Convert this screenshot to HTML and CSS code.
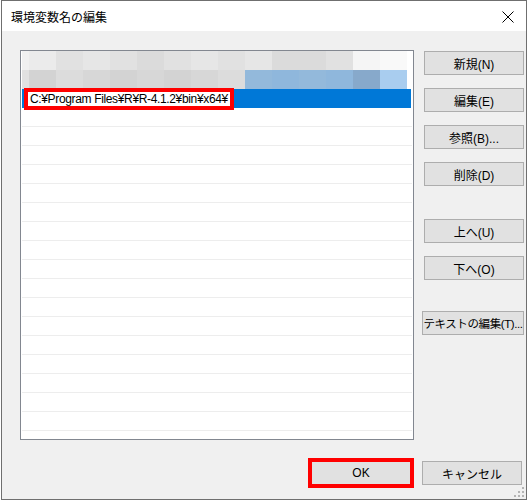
FILE: index.html
```html
<!DOCTYPE html>
<html lang="ja">
<head>
    <meta charset="UTF-8">
    <title>環境変数名の編集</title>
    <link rel="stylesheet" href="styles.css">
</head>
<body>
    <div class="window">
        <!-- タイトルバー -->
        <div class="titlebar">
            <span class="title">環境変数名の編集</span>
            <svg class="close" width="12" height="12" viewBox="0 0 12 12">
                <path d="M0.5 0.5 L11.5 11.5 M11.5 0.5 L0.5 11.5" stroke="#000" stroke-width="1" fill="none"/>
            </svg>
        </div>

        <div class="content">
            <div class="main">
                <!-- パス一覧 -->
                <div class="list">
                    <div class="row mosaic">
                        <span class="edge g0"></span><span class="g1"></span><span class="g3"></span><span class="g2"></span><span class="g3"></span><span class="g4"></span><span class="g3"></span><span class="g2"></span><span class="g3"></span><span class="g2"></span><span class="g4"></span><span class="g4"></span><span class="g3"></span><span class="w1"></span><span class="w2"></span>
                    </div>
                    <div class="row mosaic">
                        <span class="edge g3"></span><span class="d1"></span><span class="d3"></span><span class="d2"></span><span class="d1"></span><span class="d2"></span><span class="d1"></span><span class="d2"></span><span class="d3"></span><span class="b1"></span><span class="b2"></span><span class="b1"></span><span class="b2"></span><span class="b3"></span><span class="b4"></span>
                    </div>
                    <div class="row selected">
                        <div class="edit">C:¥Program Files¥R¥R-4.1.2¥bin¥x64¥</div>
                    </div>
                    <div class="row"></div>
                    <div class="row"></div>
                    <div class="row"></div>
                    <div class="row"></div>
                    <div class="row"></div>
                    <div class="row"></div>
                    <div class="row"></div>
                    <div class="row"></div>
                    <div class="row"></div>
                    <div class="row"></div>
                    <div class="row"></div>
                    <div class="row"></div>
                    <div class="row"></div>
                    <div class="row"></div>
                    <div class="row"></div>
                    <div class="row"></div>
                    <div class="row"></div>
                    <div class="row"></div>
                </div>

                <!-- 操作ボタン -->
                <div class="side">
                    <button class="btn">新規(N)</button>
                    <button class="btn">編集(E)</button>
                    <button class="btn">参照(B)...</button>
                    <button class="btn">削除(D)</button>
                    <button class="btn group">上へ(U)</button>
                    <button class="btn">下へ(O)</button>
                    <button class="btn wide group">テキストの編集(T)...</button>
                </div>
            </div>

            <div class="footer">
                <button class="btn ok">OK</button>
                <button class="btn">キャンセル</button>
            </div>
        </div>

        <svg class="grip" width="10" height="10" viewBox="0 0 10 10">
            <rect x="8" y="0" width="2" height="2" fill="#b4b4b4"/>
            <rect x="4" y="4" width="2" height="2" fill="#b4b4b4"/>
            <rect x="8" y="4" width="2" height="2" fill="#b4b4b4"/>
            <rect x="0" y="8" width="2" height="2" fill="#b4b4b4"/>
            <rect x="4" y="8" width="2" height="2" fill="#b4b4b4"/>
            <rect x="8" y="8" width="2" height="2" fill="#b4b4b4"/>
        </svg>
    </div>
</body>
</html>
```

FILE: styles.css
```css
body {
    margin: 0;
    padding: 0 0 0 1px;
    background-color: #ffffff;
    font-family: "Liberation Sans", "Noto Sans CJK JP", sans-serif;
    font-size: 12px;
    color: #000000;
}

.window {
    position: relative;
    width: 524px;
    height: 498px;
    border: 1px solid #6f6f6f;
    background-color: #f0f0f0;
}

.titlebar {
    height: 30px;
    background-color: #ffffff;
    display: flex;
    align-items: center;
    justify-content: space-between;
    padding: 0 12px 0 9px;
}

.title {
    font-size: 12px;
}

.close {
    margin-top: 1px;
}

.content {
    padding: 19px 0 0 18px;
}

.main {
    display: flex;
    align-items: flex-start;
}

.list {
    width: 390px;
    height: 388px;
    border: 1px solid #828790;
    background-color: #ffffff;
    overflow: hidden;
    padding: 0 1px;
}

.row {
    position: relative;
    height: 19px;
    box-sizing: border-box;
    border-bottom: 1px solid #ededed;
}

.mosaic {
    display: flex;
    border-bottom: none;
}

.mosaic span {
    width: 27px;
    flex-shrink: 0;
}

.mosaic .edge {
    width: 7px;
}

.g0 { background-color: #f0f0f0; }
.g1 { background-color: #ebebeb; }
.g2 { background-color: #e6e6e6; }
.g3 { background-color: #e1e1e1; }
.g4 { background-color: #dbdbdb; }
.w1 { background-color: #f5f5f5; }
.w2 { background-color: #f9f9f9; }
.d1 { background-color: #d3d3d3; }
.d2 { background-color: #d7d7d7; }
.d3 { background-color: #dcdcdc; }
.b1 { background-color: #93b9db; }
.b2 { background-color: #8fb7dc; }
.b3 { background-color: #87a9cb; }
.b4 { background-color: #a9cdef; }

.selected {
    background-color: #0078d7;
    border-bottom: none;
    margin-right: 1px;
}

.edit {
    position: absolute;
    left: 2px;
    top: -1px;
    width: 200px;
    height: 14px;
    border: 4px solid #ff0000;
    background-color: #ffffff;
    line-height: 14px;
    padding-left: 2px;
    white-space: nowrap;
    letter-spacing: -0.35px;
    overflow: hidden;
    z-index: 1;
}

.side {
    display: flex;
    flex-direction: column;
    align-items: flex-end;
    width: 102px;
    margin-left: 8px;
    padding-top: 1px;
}

.btn {
    width: 100px;
    height: 24px;
    margin-bottom: 13px;
    padding: 0;
    background-color: #e1e1e1;
    border: 1px solid #adadad;
    font-family: "Liberation Sans", "Noto Sans CJK JP", sans-serif;
    font-size: 12px;
    color: #000000;
    white-space: nowrap;
}

.btn.group {
    margin-top: 20px;
}

.btn.wide {
    width: 102px;
    margin-top: 18px;
    font-size: 11.5px;
    letter-spacing: -0.4px;
}

.footer {
    display: flex;
    justify-content: flex-end;
    gap: 11px;
    padding: 21px 4px 0 0;
}

.footer .btn {
    margin-bottom: 0;
}

.ok {
    outline: 4px solid #ff0000;
    outline-offset: -1px;
}

.grip {
    position: absolute;
    right: 2px;
    bottom: 2px;
}
```
